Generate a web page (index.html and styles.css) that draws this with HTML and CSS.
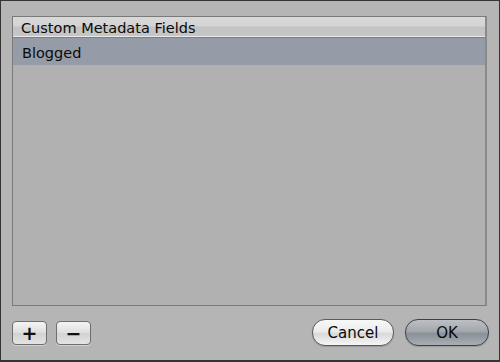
FILE: index.html
```html
<!DOCTYPE html>
<html lang="en">
  <head>
    <meta charset="UTF-8" />
    <title>Custom Metadata Fields</title>
    <link rel="stylesheet" href="styles.css">
  </head>
  <body>
    <div class="sheet">
      <!-- Field list -->
      <div class="field-list">
        <div class="list-header">Custom Metadata Fields</div>
        <div class="list-row selected">Blogged</div>
      </div>

      <!-- Bottom buttons -->
      <div class="sheet-footer">
        <div class="edit-buttons">
          <button class="square-btn">+</button>
          <button class="square-btn minus">&minus;</button>
        </div>
        <div class="dialog-buttons">
          <button class="pill-btn">Cancel</button>
          <button class="pill-btn default">OK</button>
        </div>
      </div>
    </div>
  </body>
</html>
```

FILE: styles.css
```css
body {
  margin: 0;
  font-family: "DejaVu Sans", "Lucida Grande", sans-serif;
  background-color: #b5b5b5;
}

.sheet {
  box-sizing: border-box;
  width: 500px;
  height: 362px;
  display: flex;
  flex-direction: column;
  padding: 15px 12px 0 11px;
  background: #b5b5b5;
  border: 1px solid #343434;
  border-bottom-width: 2px;
}

.field-list {
  flex: 1;
  background: #b1b1b1;
  border: 1px solid #7a7a7a;
  border-right: 2px solid #8a8a8a;
}

.list-header {
  height: 20px;
  line-height: 22px;
  padding-left: 8px;
  font-size: 14.5px;
  color: #0a0a0a;
  background: linear-gradient(#d8d8d8 0%, #d4d4d4 45%, #c3c3c3 50%, #c6c6c6 100%);
  border-bottom: 1px solid #7e7e7e;
  box-shadow: inset 0 -1px 0 #eaeaea;
}

.list-row {
  height: 27px;
  line-height: 30px;
  padding-left: 9px;
  font-size: 14.5px;
  color: #0a0a0a;
  overflow: hidden;
}

.list-row.selected {
  background: #969ca7;
}

.sheet-footer {
  display: flex;
  justify-content: space-between;
  align-items: flex-start;
  height: 54px;
  box-sizing: border-box;
  padding-top: 13px;
}

.edit-buttons {
  display: flex;
  gap: 9px;
  padding-top: 2px;
}

.square-btn {
  width: 35px;
  height: 24px;
  padding: 0;
  border: 1px solid #6e6e6e;
  border-radius: 4px;
  background: linear-gradient(#f4f4f4, #dedede 50%, #d2d2d2 51%, #e4e4e4);
  box-shadow: 0 1px 0 rgba(255, 255, 255, 0.4);
  font-family: "DejaVu Sans", sans-serif;
  font-size: 19px;
  font-weight: bold;
  line-height: 20px;
  color: #111;
}

.dialog-buttons {
  display: flex;
  gap: 11px;
  margin-right: -2px;
}

.pill-btn {
  width: 82px;
  height: 27px;
  padding: 0;
  border: 1px solid #5a5a5a;
  border-radius: 13px;
  background: linear-gradient(#f8f8f8, #ececec 45%, #d9d9d9 55%, #f6f6f6);
  box-shadow: 0 1px 1px rgba(0, 0, 0, 0.15);
  font-family: "DejaVu Sans", sans-serif;
  font-size: 15px;
  color: #0a0a0a;
}

.pill-btn.default {
  width: 84px;
  border-color: #3c4146;
  background: linear-gradient(#bcc0c5, #a3a8ae 45%, #8a9097 55%, #a9aeb4);
}
```
